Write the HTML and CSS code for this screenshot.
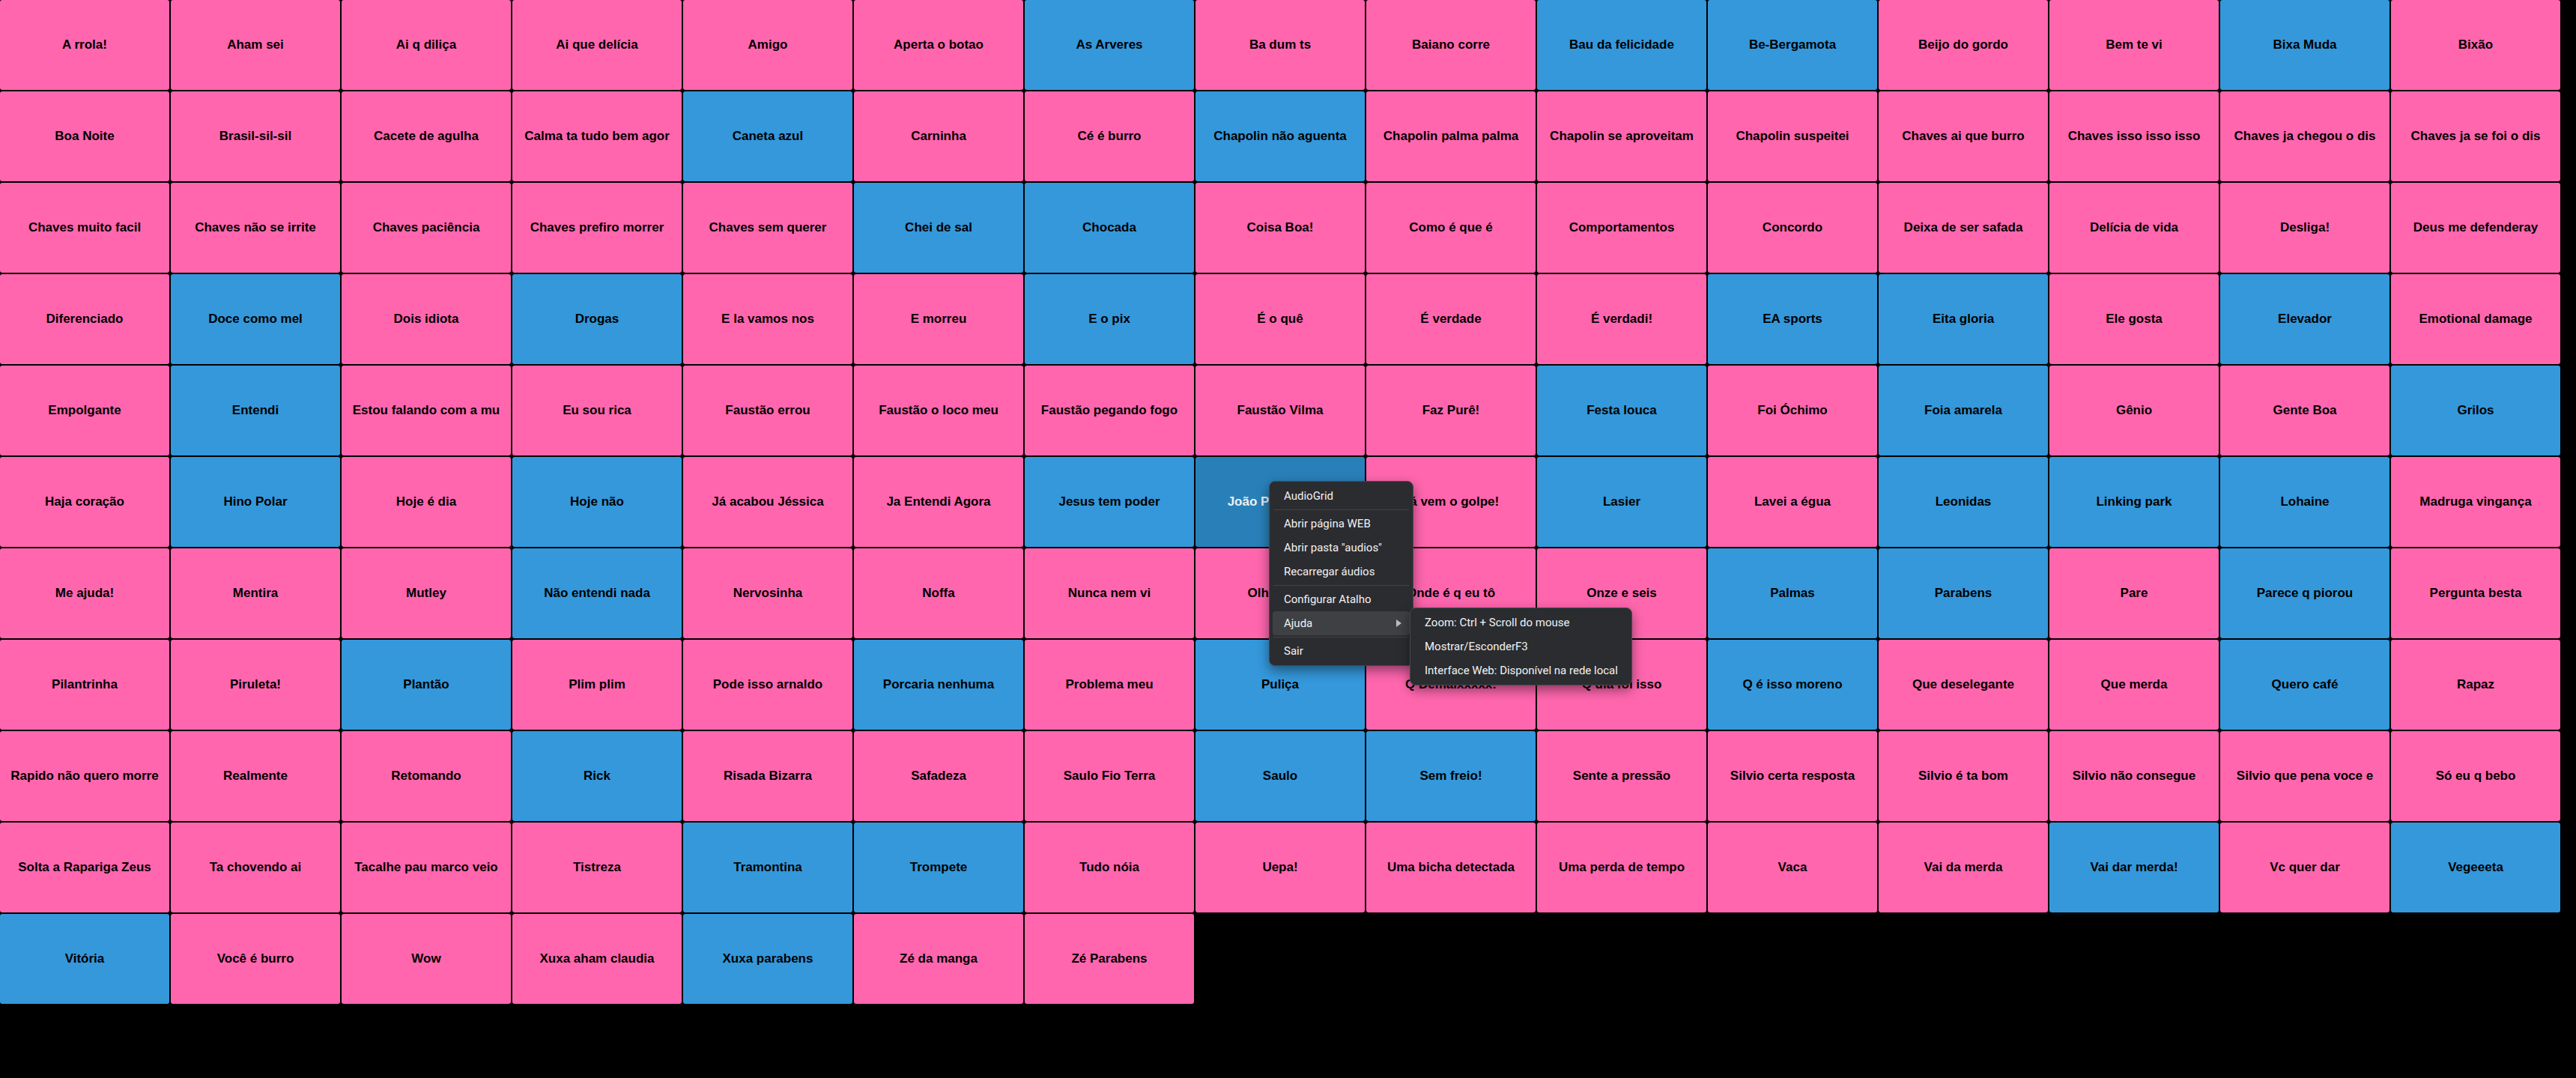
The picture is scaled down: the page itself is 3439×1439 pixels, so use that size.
FILE: index.html
```html
<!DOCTYPE html>
<html lang="pt-BR">
<head>
<meta charset="utf-8">
<title>AudioGrid</title>
<link rel="stylesheet" href="styles.css">
</head>
<body>
<main class="grid">
  <div class="cell pink">A rrola!</div>
  <div class="cell pink">Aham sei</div>
  <div class="cell pink">Ai q diliça</div>
  <div class="cell pink">Ai que delícia</div>
  <div class="cell pink">Amigo</div>
  <div class="cell pink">Aperta o botao</div>
  <div class="cell blue">As Arveres</div>
  <div class="cell pink">Ba dum ts</div>
  <div class="cell pink">Baiano corre</div>
  <div class="cell blue">Bau da felicidade</div>
  <div class="cell blue">Be-Bergamota</div>
  <div class="cell pink">Beijo do gordo</div>
  <div class="cell pink">Bem te vi</div>
  <div class="cell blue">Bixa Muda</div>
  <div class="cell pink">Bixão</div>

  <div class="cell pink">Boa Noite</div>
  <div class="cell pink">Brasil-sil-sil</div>
  <div class="cell pink">Cacete de agulha</div>
  <div class="cell pink">Calma ta tudo bem agor</div>
  <div class="cell blue">Caneta azul</div>
  <div class="cell pink">Carninha</div>
  <div class="cell pink">Cé é burro</div>
  <div class="cell blue">Chapolin não aguenta</div>
  <div class="cell pink">Chapolin palma palma</div>
  <div class="cell pink">Chapolin se aproveitam</div>
  <div class="cell pink">Chapolin suspeitei</div>
  <div class="cell pink">Chaves ai que burro</div>
  <div class="cell pink">Chaves isso isso isso</div>
  <div class="cell pink">Chaves ja chegou o dis</div>
  <div class="cell pink">Chaves ja se foi o dis</div>

  <div class="cell pink">Chaves muito facil</div>
  <div class="cell pink">Chaves não se irrite</div>
  <div class="cell pink">Chaves paciência</div>
  <div class="cell pink">Chaves prefiro morrer</div>
  <div class="cell pink">Chaves sem querer</div>
  <div class="cell blue">Chei de sal</div>
  <div class="cell blue">Chocada</div>
  <div class="cell pink">Coisa Boa!</div>
  <div class="cell pink">Como é que é</div>
  <div class="cell pink">Comportamentos</div>
  <div class="cell pink">Concordo</div>
  <div class="cell pink">Deixa de ser safada</div>
  <div class="cell pink">Delícia de vida</div>
  <div class="cell pink">Desliga!</div>
  <div class="cell pink">Deus me defenderay</div>

  <div class="cell pink">Diferenciado</div>
  <div class="cell blue">Doce como mel</div>
  <div class="cell pink">Dois idiota</div>
  <div class="cell blue">Drogas</div>
  <div class="cell pink">E la vamos nos</div>
  <div class="cell pink">E morreu</div>
  <div class="cell blue">E o pix</div>
  <div class="cell pink">É o quê</div>
  <div class="cell pink">É verdade</div>
  <div class="cell pink">É verdadi!</div>
  <div class="cell blue">EA sports</div>
  <div class="cell blue">Eita gloria</div>
  <div class="cell pink">Ele gosta</div>
  <div class="cell blue">Elevador</div>
  <div class="cell pink">Emotional damage</div>

  <div class="cell pink">Empolgante</div>
  <div class="cell blue">Entendi</div>
  <div class="cell pink">Estou falando com a mu</div>
  <div class="cell pink">Eu sou rica</div>
  <div class="cell pink">Faustão errou</div>
  <div class="cell pink">Faustão o loco meu</div>
  <div class="cell pink">Faustão pegando fogo</div>
  <div class="cell pink">Faustão Vilma</div>
  <div class="cell pink">Faz Purê!</div>
  <div class="cell blue">Festa louca</div>
  <div class="cell pink">Foi Óchimo</div>
  <div class="cell blue">Foia amarela</div>
  <div class="cell pink">Gênio</div>
  <div class="cell pink">Gente Boa</div>
  <div class="cell blue">Grilos</div>

  <div class="cell pink">Haja coração</div>
  <div class="cell blue">Hino Polar</div>
  <div class="cell pink">Hoje é dia</div>
  <div class="cell blue">Hoje não</div>
  <div class="cell pink">Já acabou Jéssica</div>
  <div class="cell pink">Ja Entendi Agora</div>
  <div class="cell blue">Jesus tem poder</div>
  <div class="cell blue hovered">João Paçoquinha</div>
  <div class="cell pink">Já vem o golpe!</div>
  <div class="cell blue">Lasier</div>
  <div class="cell pink">Lavei a égua</div>
  <div class="cell blue">Leonidas</div>
  <div class="cell blue">Linking park</div>
  <div class="cell blue">Lohaine</div>
  <div class="cell pink">Madruga vingança</div>

  <div class="cell pink">Me ajuda!</div>
  <div class="cell pink">Mentira</div>
  <div class="cell pink">Mutley</div>
  <div class="cell blue">Não entendi nada</div>
  <div class="cell pink">Nervosinha</div>
  <div class="cell pink">Noffa</div>
  <div class="cell pink">Nunca nem vi</div>
  <div class="cell pink">Olha o gás</div>
  <div class="cell pink">Onde é q eu tô</div>
  <div class="cell pink">Onze e seis</div>
  <div class="cell blue">Palmas</div>
  <div class="cell blue">Parabens</div>
  <div class="cell pink">Pare</div>
  <div class="cell blue">Parece q piorou</div>
  <div class="cell pink">Pergunta besta</div>

  <div class="cell pink">Pilantrinha</div>
  <div class="cell pink">Piruleta!</div>
  <div class="cell blue">Plantão</div>
  <div class="cell pink">Plim plim</div>
  <div class="cell pink">Pode isso arnaldo</div>
  <div class="cell blue">Porcaria nenhuma</div>
  <div class="cell pink">Problema meu</div>
  <div class="cell blue">Puliça</div>
  <div class="cell pink">Q Demaixxxxx!</div>
  <div class="cell pink">Q dia foi isso</div>
  <div class="cell blue">Q é isso moreno</div>
  <div class="cell pink">Que deselegante</div>
  <div class="cell pink">Que merda</div>
  <div class="cell blue">Quero café</div>
  <div class="cell pink">Rapaz</div>

  <div class="cell pink">Rapido não quero morre</div>
  <div class="cell pink">Realmente</div>
  <div class="cell pink">Retomando</div>
  <div class="cell blue">Rick</div>
  <div class="cell pink">Risada Bizarra</div>
  <div class="cell pink">Safadeza</div>
  <div class="cell pink">Saulo Fio Terra</div>
  <div class="cell blue">Saulo</div>
  <div class="cell blue">Sem freio!</div>
  <div class="cell pink">Sente a pressão</div>
  <div class="cell pink">Silvio certa resposta</div>
  <div class="cell pink">Silvio é ta bom</div>
  <div class="cell pink">Silvio não consegue</div>
  <div class="cell pink">Silvio que pena voce e</div>
  <div class="cell pink">Só eu q bebo</div>

  <div class="cell pink">Solta a Rapariga Zeus</div>
  <div class="cell pink">Ta chovendo ai</div>
  <div class="cell pink">Tacalhe pau marco veio</div>
  <div class="cell pink">Tistreza</div>
  <div class="cell blue">Tramontina</div>
  <div class="cell blue">Trompete</div>
  <div class="cell pink">Tudo nóia</div>
  <div class="cell pink">Uepa!</div>
  <div class="cell pink">Uma bicha detectada</div>
  <div class="cell pink">Uma perda de tempo</div>
  <div class="cell pink">Vaca</div>
  <div class="cell pink">Vai da merda</div>
  <div class="cell blue">Vai dar merda!</div>
  <div class="cell pink">Vc quer dar</div>
  <div class="cell blue">Vegeeeta</div>

  <div class="cell blue">Vitória</div>
  <div class="cell pink">Você é burro</div>
  <div class="cell pink">Wow</div>
  <div class="cell pink">Xuxa aham claudia</div>
  <div class="cell blue">Xuxa parabens</div>
  <div class="cell pink">Zé da manga</div>
  <div class="cell pink">Zé Parabens</div>
</main>

<div class="menu main-menu">
  <div class="item">AudioGrid</div>
  <div class="sep"></div>
  <div class="item">Abrir página WEB</div>
  <div class="item">Abrir pasta "audios"</div>
  <div class="item">Recarregar áudios</div>
  <div class="sep"></div>
  <div class="item">Configurar Atalho</div>
  <div class="item active has-sub">Ajuda<svg class="arrow" width="7" height="10" viewBox="0 0 7 10"><path d="M0 0 L7 5 L0 10 Z" fill="#bdbdbd"/></svg></div>
  <div class="sep"></div>
  <div class="item">Sair</div>
</div>

<div class="menu sub-menu">
  <div class="item">Zoom: Ctrl + Scroll do mouse</div>
  <div class="item">Mostrar/EsconderF3</div>
  <div class="item">Interface Web: Disponível na rede local</div>
</div>
</body>
</html>
```
FILE: styles.css
```css
html, body {
  margin: 0;
  padding: 0;
  background: #000;
  width: 3439px;
  height: 1439px;
  overflow: hidden;
}

.grid {
  display: grid;
  grid-template-columns: repeat(15, 226px);
  grid-auto-rows: 120px;
  gap: 2px;
  width: 3418px;
}

.cell {
  display: flex;
  align-items: center;
  justify-content: center;
  border-radius: 3px;
  font-family: "Liberation Sans", Arial, sans-serif;
  font-weight: bold;
  font-size: 17px;
  color: #000;
  white-space: nowrap;
  overflow: hidden;
}

.pink { background: #ff66ae; }
.blue { background: #3498db; }
.hovered { background: #2980b9; color: #ecf0f1; }

.menu {
  position: absolute;
  box-sizing: border-box;
  background: #2b2c30;
  border: 1px solid #48494d;
  border-radius: 8px;
  padding: 3px 0;
  box-shadow: 0 6px 16px rgba(0, 0, 0, 0.45);
  font-family: "Segoe UI", Roboto, sans-serif;
  font-size: 15px;
  color: #f2f2f2;
}

.main-menu {
  left: 1694px;
  top: 642px;
  width: 193px;
}

.sub-menu {
  left: 1882px;
  top: 811px;
  width: 297px;
}

.item {
  display: flex;
  align-items: center;
  height: 32px;
  margin: 0 4px;
  padding-left: 15px;
  border-radius: 4px;
}

.active {
  background: #3f4044;
}

.has-sub {
  justify-content: space-between;
  padding-right: 11px;
}

.sep {
  height: 1px;
  margin: 2px 5px;
  background: #424347;
}
```
